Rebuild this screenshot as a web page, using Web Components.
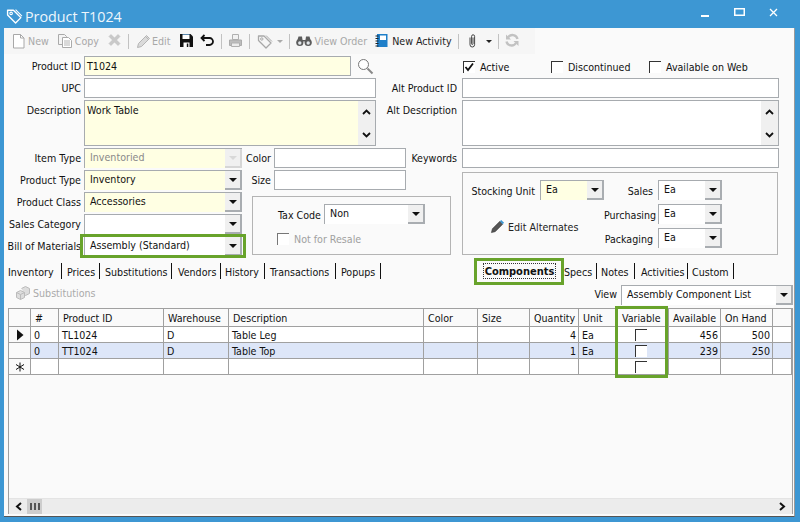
<!DOCTYPE html>
<html>
<head>
<meta charset="utf-8">
<title>Product T1024</title>
<style>
  html, body { margin: 0; padding: 0; background: #3d97d3; }
  body { font: 10.6px "DejaVu Sans Condensed", "DejaVu Sans", sans-serif; color: #111; }
</style>
</head>
<body>
<app-window heading="Product T1024">
  <app-toolbar></app-toolbar>
  <product-form></product-form>
  <detail-tabs></detail-tabs>
</app-window>

<script>
// Icons used in the title bar and toolbar
const ICONS = {
  tag: '<path d="M1.500 3h5.500l7 7-5 5-7.500-7.500z" fill="none" stroke="currentColor" stroke-width="1.300" stroke-linejoin="round"/><path d="M9 2.500l6 6" fill="none" stroke="currentColor"/><circle cx="4.800" cy="6" r="1.200" fill="none" stroke="currentColor"/>',
  page: '<path d="M1.500 1.500h7l3.500 3.500v10h-10.500z" fill="#fff" stroke="#a8a8a8"/><path d="M8.500 1.500V5H12" fill="none" stroke="#a8a8a8"/>',
  copy: '<path d="M1.500 1.500h6l2 2v8h-8z" fill="#f4f4f4" stroke="#aaa"/><path d="M5.500 4.500h6l3 3v7h-9z" fill="#fff" stroke="#aaa"/><path d="M7 8h6M7 10h6M7 12h6" stroke="#b5b5b5"/>',
  del: '<path d="M2 3.500 4 1.500 7.500 5 11 1.500l2 2L9.500 7l3.500 3.500-2 2L7.500 9 4 12.500l-2-2L5.500 7z" fill="#c9c9c9" stroke="#c0c0c0" stroke-width=".6"/>',
  pencil: '<path d="M1.500 14.500l1-4L10.500 2.500l3 3-8 8z" fill="#dadada" stroke="#b4b4b4"/><path d="M9.500 3.500l3 3" stroke="#b4b4b4"/>',
  save: '<path d="M1 1h10.500L14 3.500V14H1z" fill="#111"/><path d="M3.500 1h7v.8h-7z" fill="#3f86c0"/><path d="M3.500 1.800h7v4.200h-7z" fill="#fff"/><path d="M4.500 9.500h6V14h-6z" fill="#fff"/><path d="M7.800 10.500h1.500V14H7.800z" fill="#111"/>',
  undo: '<path d="M4.500 2 1.500 5l3 3" fill="none" stroke="#111" stroke-width="1.800"/><path d="M2 5h7.500a3.200 3.200 0 0 1 0 7H6" fill="none" stroke="#111" stroke-width="1.800"/>',
  printer: '<path d="M4.500 1.500h6v5h-6z" fill="#f2f2f2" stroke="#b0b0b0"/><path d="M1.500 7h12v5.500h-12z" fill="#bdbdbd" stroke="#ababab"/><path d="M3.500 10h8v3.500h-8z" fill="#ececec" stroke="#b0b0b0"/>',
  binoculars: '<circle cx="3.800" cy="9.500" r="3.600" fill="#5c5c5c"/><circle cx="12.200" cy="9.500" r="3.600" fill="#5c5c5c"/><path d="M2.500 3.500h3.500l.5 3.500h3l.5-3.500h3.500l1.500 5H1z" fill="#5c5c5c"/><circle cx="3.800" cy="10" r="1.700" fill="#e3e8ec"/><circle cx="12.200" cy="10" r="1.700" fill="#e3e8ec"/>',
  notebook: '<path d="M2 1h10.500v13H2z" fill="#1e7fc9"/><path d="M5 2.500h6V7H5z" fill="#fff"/><path d="M.5 3h3M.5 5.500h3M.5 8h3M.5 10.500h3M.5 13h3" stroke="#222"/>',
  clip: '<path d="M3 4.500v7.200a2.300 2.300 0 0 0 4.600 0V3.300a1.500 1.500 0 0 0-3 0v7.500a.7.700 0 0 0 1.400 0V4.500" fill="none" stroke="#444" stroke-width="1"/>',
  refresh: '<path d="M12.500 6A5.200 5.200 0 0 0 3 4.500" fill="none" stroke="#c2c2c2" stroke-width="2.400"/><path d="M1.500 8.500a5.200 5.200 0 0 0 9.500 1.500" fill="none" stroke="#c2c2c2" stroke-width="2.400"/><path d="M1 1.500v5h5zM13.500 13v-5h-5z" fill="#c2c2c2"/>'
};

function icon(name, size = 16, box = 16) {
  return `<svg width="${size}" height="${size}" viewBox="0 0 ${box} ${box}" style="display:block;flex:none">${ICONS[name]}</svg>`;
}

class AppWindow extends HTMLElement {
  connectedCallback() {
    this.attachShadow({ mode: 'open' }).innerHTML = `
      <style>
        :host { display: block; width: 800px; height: 522px; background: #3d97d3; overflow: hidden; }
        .title { height: 28px; display: flex; align-items: center; color: #fff; padding-left: 6px; box-sizing: border-box; }
        .title .name { font: 14.300px "Open Sans", sans-serif; margin-left: 2px; color: #eef6fc; position: relative; top: 2px; }
        .title svg.logo { position: relative; top: 1px; }
        .title .controls { margin-left: auto; display: flex; align-self: flex-start; margin-right: 10px; }
        .body { margin: 0 5px 5px 4px; height: 489px; background: #fafafa; position: relative; border-bottom: 1px solid #555; border-right: 1px solid #9a9a9a; box-sizing: border-box; }
        .ctl { width: 34px; height: 25px; display: flex; align-items: center; justify-content: center; }
      </style>
      <div class="title">
        <svg class="logo" width="17" height="17" viewBox="0 0 16 16" style="color:#fff">${ICONS.tag}</svg>
        <span class="name">${this.getAttribute('heading')}</span>
        <div class="controls">
          <div class="ctl"><svg width="9" height="10"><rect y="7" width="8" height="2" fill="#fff"/></svg></div>
          <div class="ctl"><svg width="11" height="9"><rect x=".75" y=".75" width="9.500" height="6.500" fill="none" stroke="#fff" stroke-width="1.500"/></svg></div>
          <div class="ctl"><svg width="9" height="9"><path d="M1 1l7 7M8 1l-7 7" stroke="#fff" stroke-width="1.300"/></svg></div>
        </div>
      </div>
      <div class="body"><slot></slot></div>`;
  }
}

class AppToolbar extends HTMLElement {
  connectedCallback() {
    const btn = (ic, text, cls, iconGap = 0) => `<span class="btn ${cls || ''}" style="gap:${iconGap}px">${icon(ic, 16)}${text ? `<span>${text}</span>` : ''}</span>`;
    const caret = (color) => `<span class="caret" style="border-top-color:${color}"></span>`;
    const gap = (w) => `<span style="width:${w}px;flex:none"></span>`;
    const sep = '<span class="sep"></span>';
    this.attachShadow({ mode: 'open' }).innerHTML = `
      <style>
        :host { display: flex; align-items: center; height: 26px; width: 531px; background: #f6f6f6; padding-left: 8px; box-sizing: border-box; }
        .btn { display: inline-flex; align-items: center; color: #a8a8a8; white-space: nowrap; }
        .btn.on { color: #222; }
        .sep { width: 1px; height: 15px; background: #c2c2c2; flex: none; }
        .caret { width: 0; height: 0; border: 3px solid transparent; border-bottom: 0; flex: none; }
      </style>
      ${btn('page', 'New')}${gap(8)}
      ${btn('copy', 'Copy', '', 2)}${gap(8)}
      ${btn('del', '')}${gap(5)}${sep}${gap(7)}
      ${btn('pencil', 'Edit')}${gap(9)}
      ${btn('save', '', 'on')}${gap(5)}
      ${btn('undo', '', 'on')}${gap(5)}${sep}${gap(6)}
      ${btn('printer', '')}${gap(5)}${sep}${gap(7)}
      ${btn('tag', '')}${gap(4)}${caret('#aaa')}${gap(6)}${sep}${gap(6)}
      ${btn('binoculars', 'View Order', '', 2)}${gap(8)}
      ${btn('notebook', 'New Activity', 'on', 1)}${gap(6)}${sep}${gap(8)}
      ${btn('clip', '', 'on')}${gap(3)}${caret('#222')}${gap(6)}${sep}${gap(6)}
      ${btn('refresh', '')}`;
  }
}

class TextBox extends HTMLElement {
  connectedCallback() {
    const hasScroll = this.hasAttribute('multiline');
    this.attachShadow({ mode: 'open' }).innerHTML = `
      <style>
        :host { display: block; box-sizing: border-box; height: 20px; border: 1px solid #a7abaf; background: #fff; position: relative; line-height: 18px; padding-left: 2px; overflow: hidden; }
        :host([req]) { background: #ffffe3; }
        .bar { position: absolute; right: 0; top: 0; bottom: 0; width: 17px; background: #f0f0f0; display: flex; flex-direction: column; justify-content: space-between; align-items: center; padding: 8px 0 7px; box-sizing: border-box; }
      </style>
      ${this.getAttribute('value') || ''}
      ${hasScroll ? `<div class="bar">
        <svg width="9" height="6"><path d="M1 5l3.500-3.500L8 5" fill="none" stroke="#111" stroke-width="1.800"/></svg>
        <svg width="9" height="6"><path d="M1 1l3.500 3.500L8 1" fill="none" stroke="#111" stroke-width="1.800"/></svg>
      </div>` : ''}`;
  }
}

class ComboBox extends HTMLElement {
  connectedCallback() {
    this.attachShadow({ mode: 'open' }).innerHTML = `
      <style>
        :host { display: flex; box-sizing: border-box; height: 20px; border-left: 1px solid #a7abaf; border-top: 1px solid #a7abaf; background: #fff; }
        :host([req]) { background: #ffffe3; }
        :host([disabled]) { color: #8a8a8a; }
        .val { flex: 1; padding-left: 5px; line-height: 16px; white-space: nowrap; overflow: hidden; }
        .btn { width: 15px; flex: none; background: #f0f0f0; border-right: 2px solid #a9adb1; border-bottom: 2px solid #a9adb1; display: flex; align-items: center; justify-content: center; }
        .arrow { width: 0; height: 0; border: 4px solid transparent; border-top: 4px solid #111; border-bottom: 0; }
        :host([disabled]) .btn { border-color: #d6d6d6; }
        :host([disabled]) .arrow { border-top-color: #d8d8d8; }
      </style>
      <div class="val">${this.getAttribute('value') || ''}</div>
      <div class="btn"><span class="arrow"></span></div>`;
  }
}

class CheckBox extends HTMLElement {
  connectedCallback() {
    const checked = this.hasAttribute('checked');
    const text = this.getAttribute('label');
    this.attachShadow({ mode: 'open' }).innerHTML = `
      <style>
        :host { display: inline-flex; align-items: center; gap: 5px; white-space: nowrap; }
        :host([disabled]) { color: #a0a0a0; }
        .box { width: 11px; height: 11px; border-left: 1px solid #333; border-top: 1px solid #333; background: #fff; flex: none; }
        :host([disabled]) .box { border-color: #777; }
        svg { display: block; }
      </style>
      <span class="box">${checked ? '<svg width="11" height="11"><path d="M1.500 5l2.500 3 5-6.500" fill="none" stroke="#111" stroke-width="1.800"/></svg>' : ''}</span>
      ${text ? `<span>${text}</span>` : ''}`;
  }
}

class ProductForm extends HTMLElement {
  connectedCallback() {
    this.attachShadow({ mode: 'open' }).innerHTML = `
      <style>
        :host { display: block; position: relative; height: 200px; padding-top: 2px; box-sizing: border-box; }
        .lbl { display: block; text-align: right; white-space: nowrap; line-height: 21px; }
        .top { display: grid; grid-template-columns: 80px 292px 86px 317px; row-gap: 2px; grid-template-rows: 20px 20px 46px; }
        .top .lbl { padding-right: 3px; }
        .top .lbl.r { padding-right: 5px; }
        .idrow { display: flex; align-items: center; gap: 6px; }
        .idrow text-box { width: 267px; flex: none; }
        .checks { display: flex; align-items: center; padding: 1px 0 0 1px; }
        .checks check-box:nth-child(1) { width: 88px; }
        .checks check-box:nth-child(2) { width: 98px; }
        .mid { margin-top: 2px; display: grid; grid-template-columns: 80px 158px 32px 132px 56px 317px; grid-template-rows: repeat(5, 20px); row-gap: 2px; }
        .mid .lbl { padding-right: 3px; }
        .group { border: 1px solid #b4b4b4; box-sizing: border-box; }
        .tax { grid-column: 3 / 6; grid-row: 3 / 6; margin: 4px 0 1px 10px; display: grid; grid-template-columns: 71px 101px; grid-template-rows: 20px 20px; align-content: start; row-gap: 5px; padding-top: 7px; width: 199px; }
        .tax .lbl { padding-right: 3px; line-height: 22px; }
        .tax check-box { grid-column: 1 / 3; padding-left: 24px; }
        .stock { grid-column: 6; grid-row: 2 / 6; margin: 2px 1px 1px 0; display: grid; grid-template-columns: 77px 64px 54px 64px; grid-template-rows: repeat(3, 20px); row-gap: 4px; align-content: start; padding-top: 7px; }
        .stock .lbl { padding-right: 5px; line-height: 23px; }
        .edit { grid-column: 1 / 3; grid-row: 2 / 4; display: flex; align-items: center; gap: 3px; padding: 1px 0 0 27px; color: #222; white-space: nowrap; }
        .callout { position: absolute; border: 3px solid #68a32b; box-sizing: border-box; pointer-events: none; }
      </style>
      <div class="top">
        <div class="lbl">Product ID</div>
        <div class="idrow"><text-box req value="T1024"></text-box>
          <svg width="17" height="17" viewBox="0 0 17 17"><circle cx="6.500" cy="6.500" r="5" fill="#fff" stroke="#777"/><path d="M10.500 10.500l5 5" stroke="#888" stroke-width="2"/></svg></div>
        <div class="lbl r"></div>
        <div class="checks"><check-box checked label="Active"></check-box><check-box label="Discontinued"></check-box><check-box label="Available on Web"></check-box></div>

        <div class="lbl">UPC</div>
        <text-box></text-box>
        <div class="lbl r">Alt Product ID</div>
        <text-box></text-box>

        <div class="lbl">Description</div>
        <text-box req multiline value="Work Table" style="height:46px"></text-box>
        <div class="lbl r">Alt Description</div>
        <text-box multiline style="height:46px"></text-box>
      </div>
      <div class="mid">
        <div class="lbl" style="grid-area:1/1">Item Type</div>
        <combo-box req disabled value="Inventoried" style="grid-area:1/2"></combo-box>
        <div class="lbl" style="grid-area:1/3">Color</div>
        <text-box style="grid-area:1/4"></text-box>
        <div class="lbl" style="grid-area:1/5;padding-right:5px">Keywords</div>
        <text-box style="grid-area:1/6"></text-box>

        <div class="lbl" style="grid-area:2/1">Product Type</div>
        <combo-box req value="Inventory" style="grid-area:2/2"></combo-box>
        <div class="lbl" style="grid-area:2/3">Size</div>
        <text-box style="grid-area:2/4"></text-box>

        <div class="lbl" style="grid-area:3/1">Product Class</div>
        <combo-box req value="Accessories" style="grid-area:3/2"></combo-box>

        <div class="lbl" style="grid-area:4/1">Sales Category</div>
        <combo-box style="grid-area:4/2"></combo-box>

        <div class="lbl" style="grid-area:5/1">Bill of Materials</div>
        <combo-box value="Assembly (Standard)" style="grid-area:5/2"></combo-box>

        <div class="group tax">
          <div class="lbl">Tax Code</div>
          <combo-box value="Non"></combo-box>
          <check-box disabled label="Not for Resale"></check-box>
        </div>

        <div class="group stock">
          <div class="lbl">Stocking Unit</div>
          <combo-box req value="Ea"></combo-box>
          <div class="lbl">Sales</div>
          <combo-box value="Ea"></combo-box>

          <div class="edit">
            <svg width="15" height="15" viewBox="0 0 16 16"><path d="M1.500 14.500l1-4L10.500 2.500l3 3-8 8z" fill="#555" stroke="#333" stroke-width=".6"/><path d="M10.500 2.500l1.500-1.500 3 3-1.500 1.500z" fill="#3d97d3"/></svg>
            <span>Edit Alternates</span>
          </div>
          <div class="lbl" style="grid-area:2/3">Purchasing</div>
          <combo-box value="Ea" style="grid-area:2/4"></combo-box>
          <div class="lbl" style="grid-area:3/3">Packaging</div>
          <combo-box value="Ea" style="grid-area:3/4"></combo-box>
        </div>
      </div>
      <div class="callout" style="left:76px;top:180px;width:166px;height:24px"></div>`;
  }
}

class DetailTabs extends HTMLElement {
  connectedCallback() {
    // text, box width, left padding: the strips are not evenly spaced
    const left = [['Inventory', 54, 0], ['Prices', 38, 5], ['Substitutions', 72, 5], ['Vendors', 49, 6], ['History', 44, 4], ['Transactions', 71, 5], ['Popups', 45, 5]];
    const right = [['Specs', 37, 4], ['Notes', 38, 4], ['Activities', 53, 6], ['Custom', 46, 4]];
    const tab = ([t, w, p]) => `<span class="tab" style="width:${w}px;padding-left:${p}px">${t}</span>`;
    this.attachShadow({ mode: 'open' }).innerHTML = `
      <style>
        :host { display: block; position: relative; padding-top: 9px; }
        .strip { display: flex; height: 21px; padding-left: 4px; align-items: flex-start; }
        .tabs { display: flex; }
        .tab { box-sizing: border-box; flex: none; height: 16px; line-height: 18px; border-right: 1px solid #111; white-space: nowrap; }
        .tabs.r { margin-left: auto; margin-right: 60px; }
        .active { flex: none; box-sizing: border-box; width: 73px; height: 16px; margin-right: 4px; font-weight: bold; font-size: 11px; line-height: 18px; text-align: center; outline: 1px dotted #333; outline-offset: -1px; white-space: nowrap; overflow: hidden; }
        .viewrow { display: flex; justify-content: flex-end; align-items: center; gap: 4px; padding-right: 1px; height: 20px; margin-top: 1px; position: relative; }
        .viewlbl { position: relative; top: -1px; }
        .subst { position: absolute; left: 11px; top: 0; display: flex; align-items: center; gap: 2px; color: #aaa; }
        .viewrow combo-box { width: 172px; }
        .callout { position: absolute; border: 3px solid #68a32b; box-sizing: border-box; pointer-events: none; }
      </style>
      <div class="strip">
        <div class="tabs l">${left.map(tab).join('')}</div>
        <div class="tabs r"><span class="active">Components</span>${right.map(tab).join('')}</div>
      </div>
      <div class="viewrow">
        <span class="subst">
          <svg width="16" height="16" viewBox="0 0 16 16"><path d="M1.500 7.500l4-2 4 2v5l-4 2-4-2zM6.500 3.500l4-2 4 2v5l-4 2-1-.5" fill="#ddd" stroke="#bbb"/><path d="M1.500 7.500l4 2 4-2M5.500 9.500v5" fill="none" stroke="#bbb"/></svg>
          Substitutions
        </span>
        <span class="viewlbl">View</span>
        <combo-box value="Assembly Component List"></combo-box>
      </div>
      <data-grid></data-grid>
      <div class="callout" style="left:470px;top:4px;width:90px;height:27px"></div>`;
  }
}

class DataGrid extends HTMLElement {
  connectedCallback() {
    const cols = ['', '#', 'Product ID', 'Warehouse', 'Description', 'Color', 'Size', 'Quantity', 'Unit', 'Variable', 'Available', 'On Hand', ''];
    const rows = [
      { mark: 'arrow', cells: ['0', 'TL1024', 'D', 'Table Leg', '', '', '4', 'Ea', 'box', '456', '500', ''] },
      { mark: '', sel: true, cells: ['0', 'TT1024', 'D', 'Table Top', '', '', '1', 'Ea', 'box', '239', '250', ''] },
      { mark: 'star', cells: ['', '', '', '', '', '', '', '', 'box', '', '', ''] }
    ];
    const numeric = [6, 9, 10];
    const head = cols.map((c) => `<div class="h">${c}</div>`).join('');
    const body = rows.map((r) => {
      const mark = r.mark === 'arrow'
        ? '<svg width="8" height="12"><path d="M1 .5l6.500 5.500L1 11.500z" fill="#111"/></svg>'
        : r.mark === 'star' ? '<svg width="10" height="10"><path d="M5 .5v9M1 2.500l8 5M9 2.500l-8 5" stroke="#111"/></svg>' : '';
      return `<div class="m">${mark}</div>` + r.cells.map((v, i) => {
        const cls = [r.sel ? 'sel' : '', numeric.includes(i) ? 'num' : '', v === 'box' ? 'mid' : ''].join(' ');
        return `<div class="d ${cls}">${v === 'box' ? '<check-box></check-box>' : v}</div>`;
      }).join('');
    }).join('');
    this.attachShadow({ mode: 'open' }).innerHTML = `
      <style>
        :host { display: block; position: absolute; left: 4px; top: 54px; width: 785px; height: 206px; box-sizing: border-box; border-left: 1px solid #a0a0a0; border-right: 1px solid #a0a0a0; }
        .g { display: grid; grid-template-columns: 22px 28px 105px 65px 195px 54px 52px 49px 39px 51px 52px 52px 19px; grid-template-rows: 18px 16px 16px 16px; border-top: 1px solid #a0a0a0; }
        .g > div { border-right: 1px solid #a0a0a0; border-bottom: 1px solid #a0a0a0; box-sizing: border-box; overflow: hidden; white-space: nowrap; background: #fff; }
        .g > .h { background: #fafafa; line-height: 19px; padding-left: 4px; }
        .g > .m { background: #fafafa; display: flex; align-items: center; justify-content: center; }
        .d { padding: 0 2px 0 3px; line-height: 17px; }
        .g > .sel { background: #dde6f8; }
        .num { text-align: right; }
        .mid { display: flex; align-items: center; justify-content: center; padding-right: 8px; }
        .scroll { position: absolute; left: 0; right: 0; bottom: 0; height: 16px; background: #ececec; border-top: 1px solid #e4e4e4; box-sizing: border-box; display: flex; align-items: center; justify-content: space-between; padding: 0 6px; }
        .thumb { display: flex; align-items: center; gap: 2px; position: absolute; left: 18px; top: 0; bottom: 0; width: 15px; background: #cdcdcd; justify-content: center; }
        .thumb i { width: 2px; height: 7px; background: #555; display: block; }
      </style>
      <div class="g">${head}${body}</div>
      <div class="scroll">
        <svg width="7" height="9"><path d="M6 1L2 4.500 6 8" fill="none" stroke="#111" stroke-width="2"/></svg>
        <div class="thumb"><i></i><i></i><i></i></div>
        <svg width="7" height="9"><path d="M1 1l4 3.500L1 8" fill="none" stroke="#111" stroke-width="2"/></svg>
      </div>
      <div style="position:absolute;left:606px;top:-2px;width:53px;height:72px;border:3px solid #68a32b;box-sizing:border-box"></div>`;
  }
}

customElements.define('app-window', AppWindow);
customElements.define('app-toolbar', AppToolbar);
customElements.define('text-box', TextBox);
customElements.define('combo-box', ComboBox);
customElements.define('check-box', CheckBox);
customElements.define('product-form', ProductForm);
customElements.define('detail-tabs', DetailTabs);
customElements.define('data-grid', DataGrid);
</script>
</body>
</html>
